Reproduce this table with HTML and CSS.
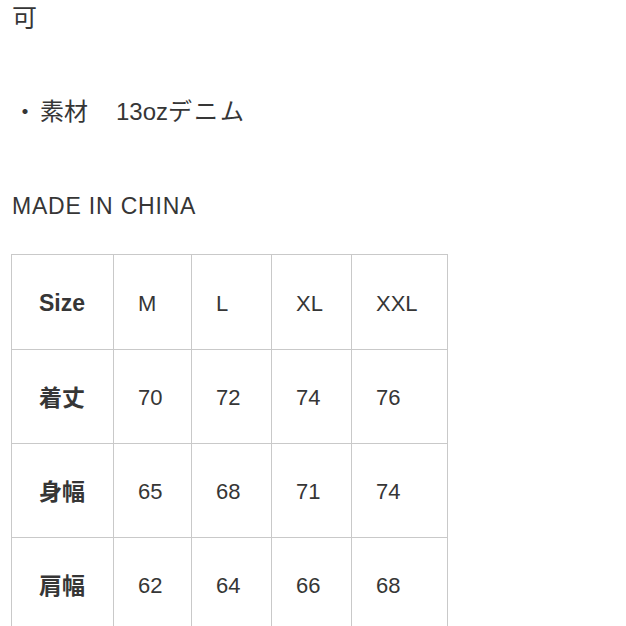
FILE: index.html
```html
<!DOCTYPE html>
<html lang="ja">
<head>
<meta charset="utf-8">
<link rel="stylesheet" href="styles.css">
</head>
<body>
<div class="page">
  <p class="line line-top">可</p>
  <p class="line line-material"><span class="dot">・</span>素材<span class="gap"></span>13oz<span class="kana">デニム</span></p>
  <p class="line line-origin">MADE IN CHINA</p>
  <table class="sizes">
    <colgroup>
      <col class="c0"><col class="c1"><col class="c2"><col class="c3"><col class="c4">
    </colgroup>
    <tr class="head"><th>Size</th><td>M</td><td>L</td><td>XL</td><td>XXL</td></tr>
    <tr><th class="jp">着丈</th><td>70</td><td>72</td><td>74</td><td>76</td></tr>
    <tr><th class="jp">身幅</th><td>65</td><td>68</td><td>71</td><td>74</td></tr>
    <tr><th class="jp">肩幅</th><td>62</td><td>64</td><td>66</td><td>68</td></tr>
  </table>
</div>
</body>
</html>
```
FILE: styles.css
```css
html, body {
  margin: 0;
  padding: 0;
  background: #ffffff;
}
.page {
  padding-left: 12px;
  color: #363636;
  font-family: "Liberation Sans", "Noto Sans CJK JP", sans-serif;
  font-size: 23px;
}
.line {
  margin: 0;
  height: 36px;
  line-height: 36px;
  white-space: nowrap;
}
.line-top {
  font-size: 25px;
}
.line-material {
  margin-top: 58px;
  font-size: 24px;
}
.dot {
  display: inline-block;
  margin-left: 1px;
  margin-right: 3px;
}
.gap {
  display: inline-block;
  width: 28px;
}
.kana {
  letter-spacing: 2px;
}
.line-origin {
  margin-top: 58px;
  letter-spacing: 0.8px;
}
.sizes {
  margin-top: 30px;
  margin-left: -1px;
  border-collapse: collapse;
  table-layout: fixed;
  width: 436px;
}
.c0 { width: 102px; }
.c1 { width: 78px; }
.c2 { width: 80px; }
.c3 { width: 80px; }
.c4 { width: 96px; }
.sizes th, .sizes td {
  border: 1px solid #c9c9c9;
  height: 91px;
  padding: 2px 0 0 24px;
  text-align: left;
  vertical-align: middle;
  font-size: 22px;
  font-weight: normal;
}
.sizes .head th, .sizes .head td {
  height: 91px;
  padding-top: 3px;
}
.sizes th {
  font-weight: bold;
  padding-left: 27px;
  font-size: 23px;
}
.sizes th.jp {
  padding-top: 0;
  padding-bottom: 2px;
  height: 91px;
}
```
